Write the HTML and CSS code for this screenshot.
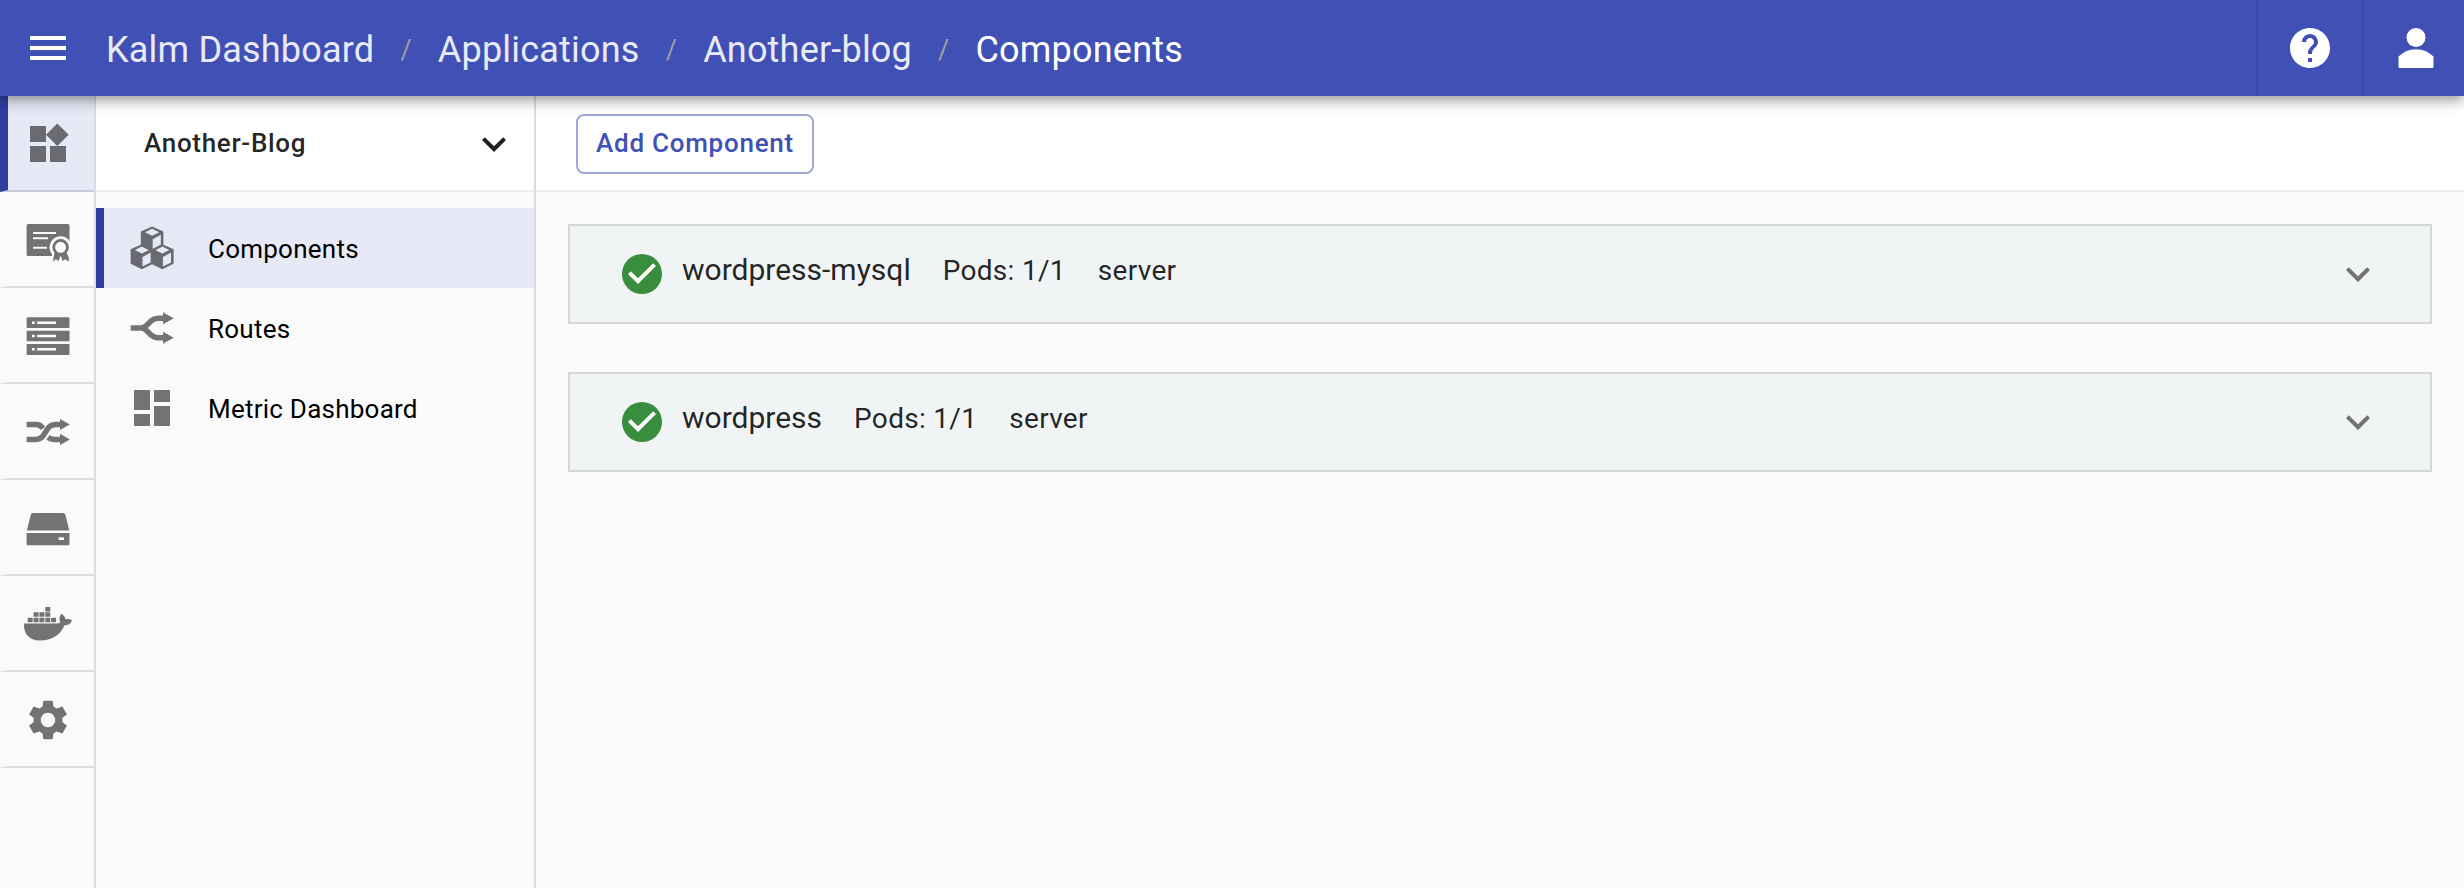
FILE: index.html
```html
<!DOCTYPE html>
<html lang="en">
<head>
<meta charset="utf-8">
<title>Kalm Dashboard</title>
<link rel="stylesheet" href="styles.css">
</head>
<body>
<header class="topbar">
  <svg class="icon menu" viewBox="0 0 24 24"><path d="M3 18h18v-2H3v2zm0-5h18v-2H3v2zm0-7v2h18V6H3z"/></svg>
  <nav class="crumbs">
    <a>Kalm Dashboard</a><span class="slash">/</span><a>Applications</a><span class="slash">/</span><a>Another-blog</a><span class="slash">/</span><a class="current">Components</a>
  </nav>
  <div class="action help"><svg class="icon" viewBox="0 0 24 24"><path d="M12 2C6.48 2 2 6.48 2 12s4.480 10 10 10 10-4.480 10-10S17.520 2 12 2zm1 17h-2v-2h2v2zm2.070-7.750l-.9.920C13.450 12.900 13 13.500 13 15h-2v-.5c0-1.100.450-2.100 1.170-2.830l1.240-1.260c.370-.360.590-.860.590-1.410 0-1.100-.9-2-2-2s-2 .9-2 2H8c0-2.210 1.790-4 4-4s4 1.790 4 4c0 .880-.360 1.680-.930 2.250z"/></svg></div>
  <div class="action user"><svg class="icon" viewBox="0 0 48 48"><circle cx="24" cy="13.500" r="9.500"/><path d="M6.500 32.500Q14 25.200 24 25.200T41.500 32.500V42.500Q41.500 44 40 44H8Q6.500 44 6.500 42.500z"/></svg></div>
</header>
<div class="body">
  <aside class="rail">
    <div class="rail-item active"><svg class="icon" viewBox="0 0 24 24"><path d="M13 13v8h8v-8h-8zM3 21h8v-8H3v8zM3 3v8h8V3H3zm13.660-1.310L11 7.340 16.660 13l5.660-5.660-5.660-5.650z"/></svg></div>
    <div class="rail-item"><svg class="icon" viewBox="0 0 48 48"><rect x="2.600" y="8" width="42.900" height="32" rx="1.500"/><path class="cut" d="M9 16h23v2H9zM9 21.200h15v2H9zM9 30.700h14v2H9z"/><circle class="cut" cx="36.600" cy="31.300" r="11"/><path class="cut" d="M28 37H48V48H28z"/><path d="M30.500 37L28.700 45.500L32 43.200L34.500 45L36.600 39.500L38.700 45L41.200 43.200L44.800 45.500V41.500L42.700 37z"/><circle class="cut ring" cx="36.600" cy="31.300" r="6.900"/></svg></div>
    <div class="rail-item"><svg class="icon" viewBox="0 0 48 48"><rect x="2.600" y="5.300" width="42.900" height="10.700" rx="1.300"/><rect x="2.600" y="18.800" width="42.900" height="10.400" rx=".5"/><rect x="2.600" y="32" width="42.900" height="11" rx="1.300"/><path class="cut" d="M8 9.400h2.700V12H8zM13 9.400h19V12H13zM8 22.700h2.700v2.600H8zM13 22.700h19v2.600H13zM8 36h2.700v2.600H8zM13 36h19v2.600H13z"/></svg></div>
    <div class="rail-item"><svg class="icon" viewBox="0 0 48 48"><path class="line" d="M2.600 16.400H12Q16.500 16.400 19 20.500M22 27.200Q25 31.400 30 31.400H37"/><path class="line halo" d="M15 31.200C24 29 21 18.500 31 16.500"/><path class="line" d="M2.600 31.400H11.500C23 31.400 20 16.400 32 16.400H37"/><path d="M36 11L45.800 16.400L36 22zM36 25.800L45.800 31.400L36 37z"/></svg></div>
    <div class="rail-item"><svg class="icon" viewBox="0 0 48 48"><path d="M9 9H39Q41 9 41.500 11L45.300 26.600H2.900L6.700 11Q7.200 9 9 9zM2.600 29H45.500V39.800Q45.500 41.300 44 41.300H4.100Q2.600 41.300 2.600 39.800z"/><path class="cut" d="M34.500 33.300H40V36H34.500z"/></svg></div>
    <div class="rail-item"><svg class="icon" viewBox="0 0 640 640"><path transform="translate(0 60)" d="M349.9 236.300h-66.100v-59.400h66.100v59.400zm0-204.300h-66.100v60.700h66.100V32zm78.200 144.800H362v59.400h66.100v-59.400zm-156.300-72.100h-66.100v60.100h66.100v-60.100zm78.100 0h-66.100v60.100h66.100v-60.100zm276.800 100c-14.400-9.700-47.600-13.200-73.100-8.400-3.300-24-16.700-44.900-41.100-63.700l-14-9.300-9.300 14c-18.400 27.800-23.400 73.600-3.700 103.800-8.700 4.700-25.800 11.100-48.400 10.700H2.400c-8.700 50.800 5.800 116.800 44 162.100 37.100 43.900 92.700 66.200 165.400 66.200 157.400 0 273.900-72.500 328.400-204.200 21.400.4 67.600.1 91.300-45.200 1.500-2.500 6.600-13.200 8.500-17.100l-13.300-8.900zm-511.100-27.900h-66v59.400h66.100v-59.400zm78.100 0h-66.100v59.400h66.100v-59.400zm78.100 0h-66.100v59.400h66.100v-59.400zm-78.100-72.100h-66.100v60.100h66.100v-60.100z"/></svg></div>
    <div class="rail-item"><svg class="icon" viewBox="0 0 24 24"><path d="M19.140 12.940c.040-.3.060-.610.060-.940 0-.320-.020-.640-.070-.940l2.030-1.580c.180-.140.230-.410.120-.610l-1.920-3.320c-.120-.220-.370-.290-.590-.220l-2.390.960c-.5-.380-1.030-.7-1.620-.940l-.360-2.540c-.040-.240-.240-.410-.480-.410h-3.840c-.240 0-.430.170-.470.410l-.360 2.540c-.590.240-1.130.570-1.620.940l-2.390-.960c-.220-.080-.470 0-.590.220L2.740 8.870c-.120.210-.080.470.120.610l2.030 1.580c-.050.3-.090.630-.090.940s.020.640.070.940l-2.030 1.580c-.180.140-.230.410-.120.610l1.920 3.320c.120.220.370.290.590.220l2.390-.960c.5.380 1.030.7 1.620.940l.360 2.540c.050.240.240.410.480.410h3.840c.240 0 .440-.170.470-.410l.360-2.540c.590-.240 1.130-.560 1.620-.940l2.390.960c.220.080.470 0 .590-.220l1.920-3.320c.120-.220.070-.470-.120-.610l-2.010-1.580zM12 15.600c-1.980 0-3.600-1.620-3.600-3.600s1.620-3.600 3.600-3.600 3.600 1.620 3.600 3.600-1.620 3.600-3.600 3.600z"/></svg></div>
  </aside>
  <aside class="side">
    <div class="side-head"><span class="side-title">Another-Blog</span><svg class="icon" viewBox="0 0 24 24"><path d="M16.590 8.590L12 13.170 7.410 8.590 6 10l6 6 6-6z"/></svg></div>
    <nav class="side-nav">
      <a class="side-item active"><svg class="icon" viewBox="0 0 48 48">
        <g id="cube"><path d="M13.900 20.200L25.200 25.300V39.800L13.900 45.200L2.600 39.800V25.300z"/><path class="face" d="M13.900 22.600L21 26L13.900 29.500L6.800 26zM14.500 33L22.600 28.600V38.600L14.500 42.600z"/></g>
        <use href="#cube" x="20.400"/><use href="#cube" x="10.200" y="-17.800"/></svg><span>Components</span></a>
      <a class="side-item"><svg class="icon" viewBox="0 0 48 48"><path class="line" d="M2.700 24H13C20.500 24 20.500 14.300 30.500 14.300H36M13 24C20.500 24 20.500 33.700 30.500 33.700H36"/><path d="M35 8.300L45.700 14.300L35 20.300zM35 27.700L45.700 33.700L35 39.700z"/></svg><span>Routes</span></a>
      <a class="side-item"><svg class="icon" viewBox="0 0 24 24"><path d="M3 13h8V3H3v10zm0 8h8v-6H3v6zm10 0h8V11h-8v10zm0-18v6h8V3h-8z"/></svg><span>Metric Dashboard</span></a>
    </nav>
  </aside>
  <main class="main">
    <div class="toolbar"><button class="btn">Add Component</button></div>
    <div class="panels">
      <section class="panel"><svg class="icon ok" viewBox="0 0 24 24"><circle cx="12" cy="12" r="10"/><path class="tick" d="M10 17l-5-5 1.410-1.410L10 14.170l7.590-7.590L19 8z"/></svg><div class="info"><span class="name">wordpress-mysql</span><span>Pods: 1/1</span><span>server</span></div><svg class="icon chevron" viewBox="0 0 24 24"><path d="M16.590 8.590L12 13.170 7.410 8.590 6 10l6 6 6-6z"/></svg></section>
      <section class="panel"><svg class="icon ok" viewBox="0 0 24 24"><circle cx="12" cy="12" r="10"/><path class="tick" d="M10 17l-5-5 1.410-1.410L10 14.170l7.590-7.590L19 8z"/></svg><div class="info"><span class="name">wordpress</span><span>Pods: 1/1</span><span>server</span></div><svg class="icon chevron" viewBox="0 0 24 24"><path d="M16.590 8.590L12 13.170 7.410 8.590 6 10l6 6 6-6z"/></svg></section>
    </div>
  </main>
</div>
</body>
</html>
```

FILE: styles.css
```css
* { box-sizing: border-box; }
body {
  margin: 0;
  height: 100vh;
  display: flex;
  flex-direction: column;
  overflow: hidden;
  background: #fafafa;
  color: rgba(0, 0, 0, .87);
  font-family: Roboto, "Liberation Sans", sans-serif;
  font-size: 26px;
  white-space: nowrap;
}
.icon { width: 48px; height: 48px; flex: none; display: block; fill: currentColor; }
.line { fill: none; stroke: currentColor; stroke-width: 5.5; }
.halo { stroke: #fafafa; stroke-width: 8.5; }
.cut { fill: #fafafa; }
.ring { stroke: #737373; stroke-width: 2.8; }
.face { fill: #e7e9f6; }

.topbar {
  position: relative;
  z-index: 2;
  flex: none;
  height: 96px;
  display: flex;
  align-items: center;
  background: #4050b5;
  color: #fff;
  box-shadow: 0 4px 8px -2px rgba(0, 0, 0, .2), 0 8px 10px 0 rgba(0, 0, 0, .14), 0 2px 20px 0 rgba(0, 0, 0, .12);
}
.menu { margin-left: 24px; }
.crumbs {
  flex: 1;
  display: flex;
  align-items: center;
  padding: 3px 0 0 34px;
  font-size: 36px;
  line-height: 54px;
  letter-spacing: .2px;
  color: #e8eaf6;
}
.crumbs .current { color: #fff; }
.slash {
  width: 63.5px;
  text-align: center;
  font-size: 27px;
  color: #9e9e9e;
}
.action {
  height: 96px;
  width: 106px;
  display: flex;
  align-items: center;
  justify-content: center;
  border-left: 2px solid #3949a1;
}
.user { width: 102px; padding-left: 4px; }

.body { flex: 1; display: flex; min-height: 0; }
.rail { width: 96px; flex: none; border-right: 2px solid #dcdcdc; color: #737373; }
.rail-item {
  height: 96px;
  padding: 24px 0 0 16px;
  border-left: 8px solid transparent;
  border-bottom: 2px solid #dcdcdc;
}
.rail-item.active {
  background: #e7e9f6;
  border-left-color: #303f9f;
  border-bottom-color: #c9cbdd;
  color: #6a6b70;
}
.side { width: 440px; flex: none; border-right: 2px solid #dcdcdc; }
.side-head {
  height: 96px;
  display: flex;
  align-items: center;
  justify-content: space-between;
  padding: 2px 16px 0 48px;
  background: #fff;
  border-bottom: 2px solid #ececec;
}
.side-title { font-weight: 500; letter-spacing: .7px; padding-bottom: 2px; }
.side-nav { padding-top: 16px; }
.side-item {
  height: 80px;
  display: flex;
  align-items: center;
  gap: 32px;
  padding-left: 24px;
  border-left: 8px solid transparent;
  color: #000;
  letter-spacing: .24px;
}
.side-item span { padding-top: 2px; }
.side-item .icon { color: #737373; }
.side-item.active { background: #e7e9f6; border-left-color: #303f9f; }
.side-item.active .icon { color: #6a6b70; }

.main { flex: 1; min-width: 0; }
.toolbar {
  height: 96px;
  padding: 18px 40px;
  background: #fff;
  border-bottom: 2px solid #ececec;
}
.btn {
  width: 238px;
  height: 60px;
  padding: 0 0 2px;
  border: 2px solid #9fa8da;
  border-radius: 8px;
  background: transparent;
  color: #3f51b5;
  font: 500 26px Roboto, "Liberation Sans", sans-serif;
  letter-spacing: .74px;
}
.panels { display: flex; flex-direction: column; gap: 48px; padding: 32px; }
.panel {
  height: 100px;
  display: flex;
  align-items: center;
  padding: 0 48px;
  background: #f0f4f5;
  border: 2px solid #d3d7d8;
}
.ok { color: #388e3c; }
.tick { fill: #fff; }
.info {
  display: flex;
  align-items: baseline;
  gap: 32px;
  padding: 0 0 10px 16px;
  font-size: 28px;
  letter-spacing: .3px;
}
.name { font-size: 30px; letter-spacing: 0; }
.chevron { margin-left: auto; color: #737373; }
```
